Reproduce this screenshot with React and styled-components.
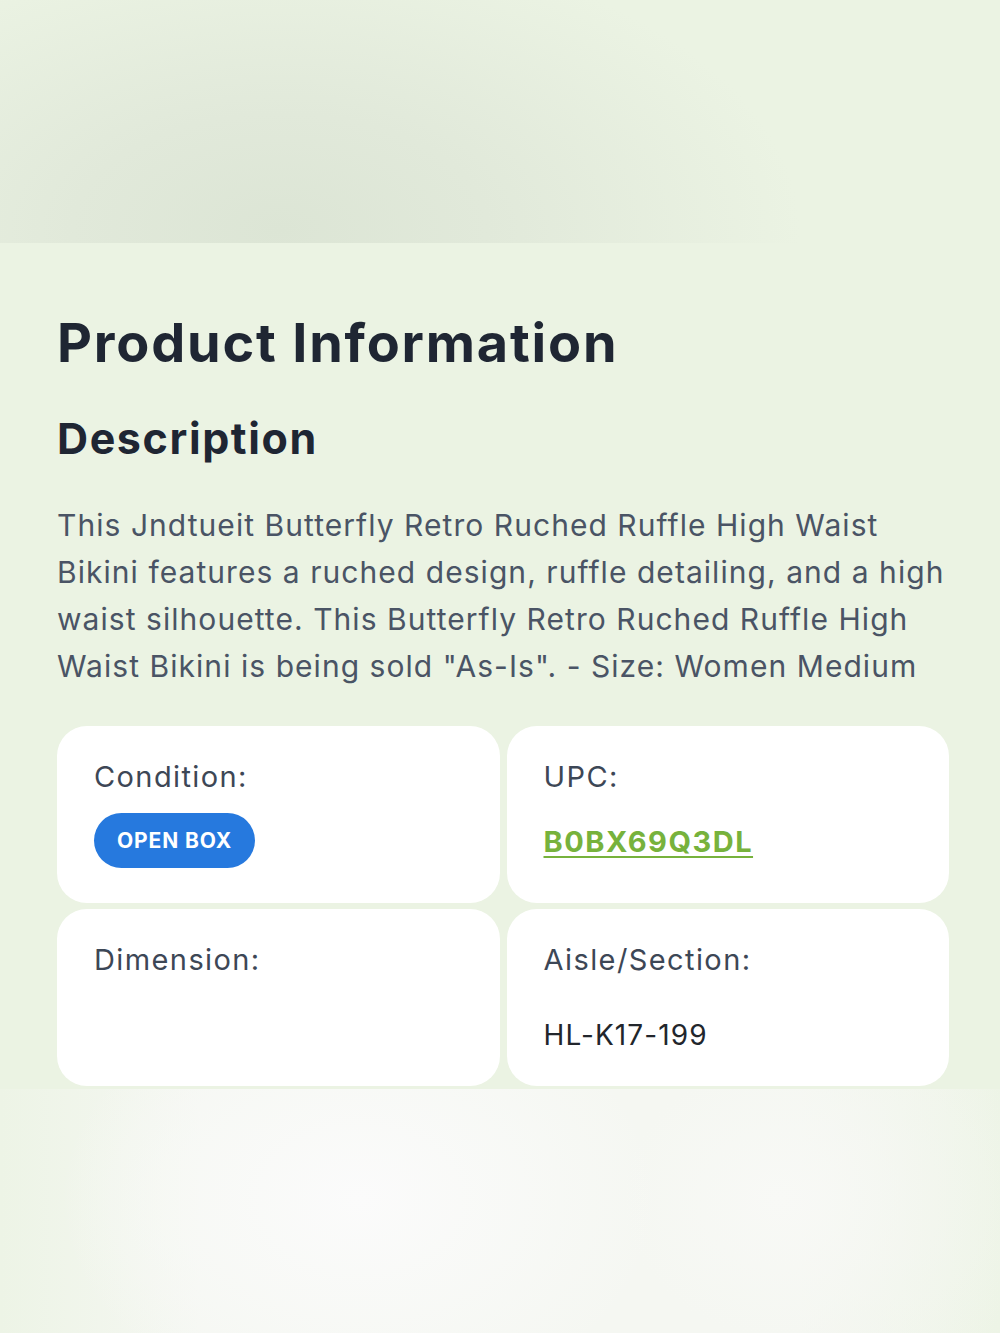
import styled, { createGlobalStyle } from "styled-components"

const Global = createGlobalStyle`
    html, body {
        margin: 0;
        padding: 0;
        background: #ebf3e3;
    }
    body {
        font-family: Inter, "Liberation Sans", sans-serif;
    }
`;

const Page = styled.div`
    width: 1000px;
    min-height: 1333px;
    display: flex;
    flex-direction: column;
    background: #ebf3e3;
`;

const Hero = styled.div`
    height: 243px;
    background:
        radial-gradient(ellipse 520px 290px at 280px 230px, #dce5d5 0%, #e1e9da 40%, rgba(235, 243, 227, 0) 100%),
        #ebf3e3;
`;

const Section = styled.section`
    padding: 64px 51px 0 57px;
    display: flex;
    flex-direction: column;
`;

const Title = styled.h1`
    margin: 0;
    font-family: Inter, sans-serif;
    font-weight: 700;
    font-size: 54px;
    line-height: 72px;
    color: #1f2633;
    letter-spacing: 1.8px;
`;

const Subtitle = styled.h2`
    margin: 31px 0 0;
    font-family: Inter, sans-serif;
    font-weight: 700;
    font-size: 43px;
    line-height: 56px;
    color: #1f2633;
    letter-spacing: 1.6px;
`;

const Text = styled.p`
    margin: 36px 0 0;
    font-size: 30px;
    line-height: 47px;
    color: #4a5465;
    letter-spacing: 1.05px;
`;

const Grid = styled.div`
    margin-top: 36px;
    display: grid;
    grid-template-columns: 1fr 1fr;
    gap: 6px 7px;
`;

const Card = styled.div`
    background: #ffffff;
    border-radius: 30px;
    height: 177px;
    box-sizing: border-box;
    padding: 32px 37px;
    display: flex;
    flex-direction: column;
    align-items: flex-start;
    gap: 17px;
`;

const Label = styled.div`
    font-size: 29px;
    line-height: 38px;
    color: #3d4756;
    letter-spacing: 1.4px;
`;

const Badge = styled.span`
    background: #2679de;
    color: #fff;
    font-weight: 700;
    font-size: 21px;
    letter-spacing: 0.9px;
    border-radius: 28px;
    padding: 0 23px;
    height: 55px;
    display: inline-flex;
    align-items: center;
`;

const Code = styled.a`
    font-size: 29px;
    font-weight: 700;
    color: #77b23c;
    letter-spacing: 1.5px;
    text-decoration: underline;
    text-underline-offset: 4px;
    text-decoration-thickness: 2px;
    margin-top: 11px;
`;

const Value = styled.div`
    font-size: 28px;
    color: #22262c;
    letter-spacing: 1.1px;
    margin-top: 22px;
`;

const Footer = styled.div`
    flex: 1;
    margin-top: 3px;
    min-height: 245px;
    background:
        radial-gradient(ellipse 300px 220px at 360px 110px, #fbfbfb 0%, rgba(249, 250, 248, 0.6) 60%, rgba(235, 243, 227, 0) 100%),
        radial-gradient(ellipse 260px 230px at 780px 110px, #f8f9f6 0%, rgba(245, 247, 242, 0.5) 60%, rgba(235, 243, 227, 0) 100%),
        linear-gradient(90deg, #edf4e6 0%, #f5f7f2 20%, #f5f7f2 80%, #edf4e6 100%);
`;

const App = () => {
  return (
    <Page>
        <Global />
        <Hero />
        <Section>
            <Title>Product Information</Title>
            <Subtitle>Description</Subtitle>
            <Text>
                This Jndtueit Butterfly Retro Ruched Ruffle High Waist Bikini features a ruched design, ruffle detailing, and a high waist silhouette. This Butterfly Retro Ruched Ruffle High Waist Bikini is being sold "As-Is". - Size: Women Medium
            </Text>
            <Grid>
                <Card>
                    <Label>Condition:</Label>
                    <Badge>OPEN BOX</Badge>
                </Card>
                <Card>
                    <Label>UPC:</Label>
                    <Code href="#">B0BX69Q3DL</Code>
                </Card>
                <Card>
                    <Label>Dimension:</Label>
                </Card>
                <Card>
                    <Label>Aisle/Section:</Label>
                    <Value>HL-K17-199</Value>
                </Card>
            </Grid>
        </Section>
        <Footer />
    </Page>
  )
}

export default App
